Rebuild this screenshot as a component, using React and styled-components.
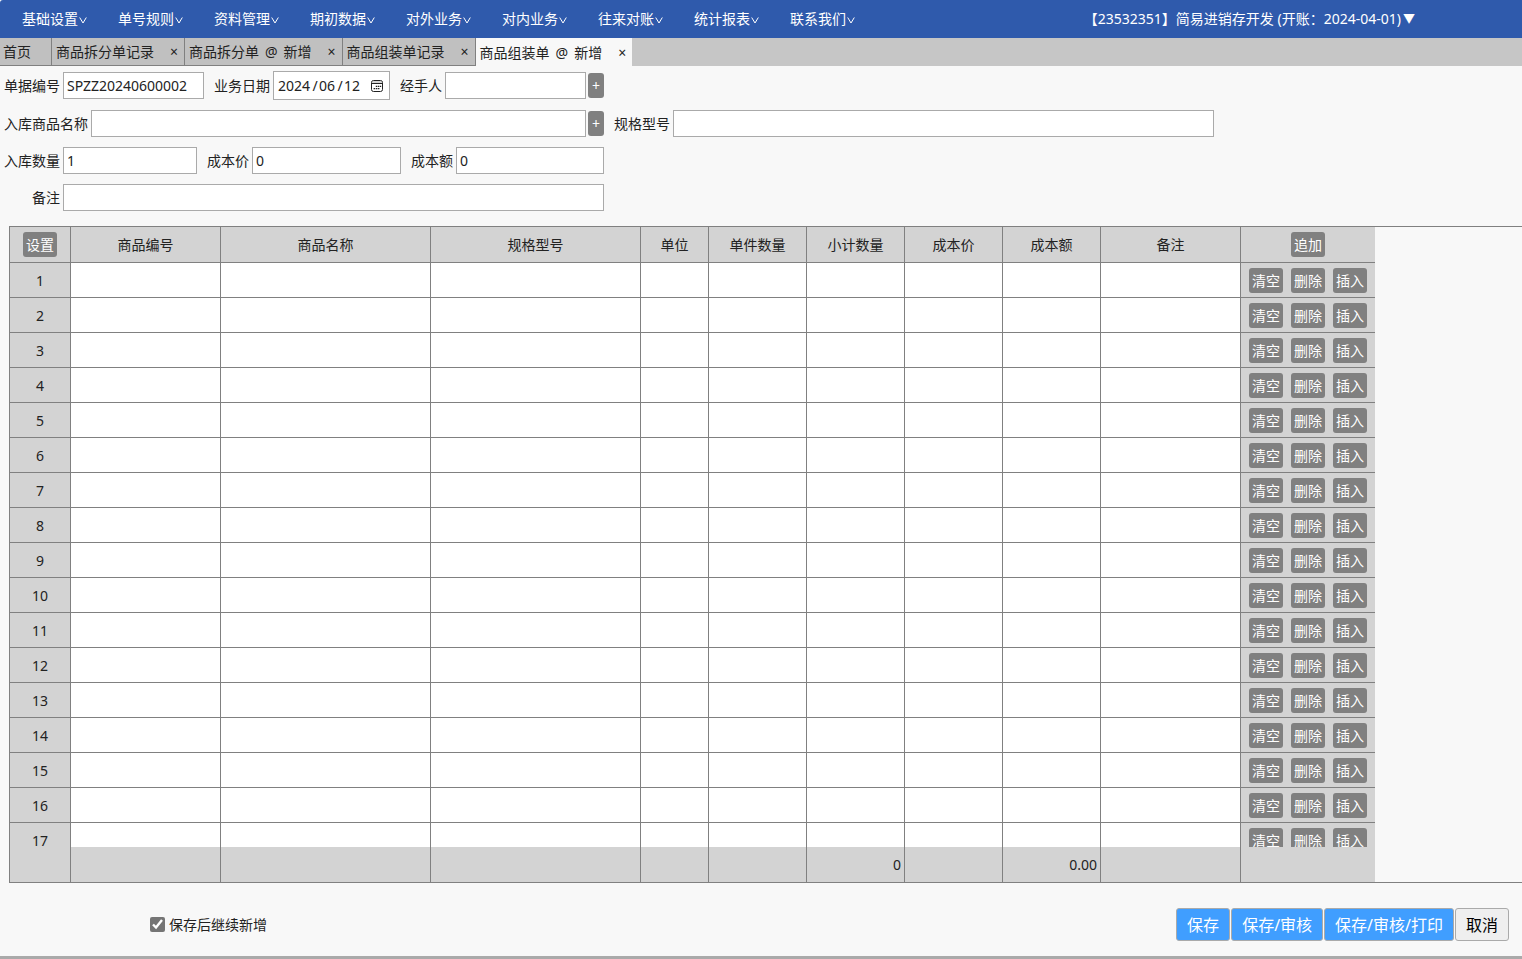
import React from 'react';
import styled, { createGlobalStyle } from 'styled-components';

const menus = [
	'基础设置',
	'单号规则',
	'资料管理',
	'期初数据',
	'对外业务',
	'对内业务',
	'往来对账',
	'统计报表',
	'联系我们',
];

const tabs = ['商品拆分单记录', '商品拆分单 @ 新增', '商品组装单记录', '商品组装单 @ 新增'];
const activeTab = 3;

const columns = [
	{ title: '商品编号', width: 150 },
	{ title: '商品名称', width: 210 },
	{ title: '规格型号', width: 210 },
	{ title: '单位', width: 68 },
	{ title: '单件数量', width: 98 },
	{ title: '小计数量', width: 98, total: '0' },
	{ title: '成本价', width: 98 },
	{ title: '成本额', width: 98, total: '0.00' },
	{ title: '备注', width: 140 },
];

const rows = Array.from({ length: 17 }, (_, i) => i + 1);

const CalendarIcon = () => (
	<svg width="14" height="14" viewBox="0 0 14 14" fill="none" stroke="#222">
		<rect x="1.5" y="1.5" width="11" height="11" rx="2" />
		<path d="M2 3h10" stroke="#aaa" />
		<path d="M2 4.5h10" />
		<path d="M5.8 7.4h1.5M7.9 7.4h1.5M10 7.4h1.2M3.6 9.6h1.5M5.8 9.6h1.5M7.9 9.6h1.5" strokeWidth="1.4" />
	</svg>
);

const Field = ({ id, label, value, width, add, labelWidth }) => (
	<FieldBox>
		<Label htmlFor={id} $width={labelWidth}>
			{label}
		</Label>
		<Input id={id} defaultValue={value} $width={width} />
		{add && <AddButton type="button">+</AddButton>}
	</FieldBox>
);

export default class App extends React.Component {
	render() {
		return (
			<React.Fragment>
				<GlobalStyle />
				<Page>
					<Nav>
						{menus.map((name) => (
							<MenuButton type="button" key={name}>
								{name}
								<Arrow viewBox="0 0 8 7">
									<path d="M0.7 0.5L4 6L7.3 0.5" />
								</Arrow>
							</MenuButton>
						))}
						<Account type="button">
							【23532351】简易进销存开发 (开账：2024-04-01)
							<Caret>▼</Caret>
						</Account>
					</Nav>
					<TabBar>
						<HomeTab href="#">首页</HomeTab>
						{tabs.map((name, i) => (
							<Tab key={name} $active={i === activeTab}>
								<TabLink href="#">
									{name.split(' ').map((part) => (
										<span key={part}>{part}</span>
									))}
								</TabLink>
								<Close type="button" aria-label="关闭">
									×
								</Close>
							</Tab>
						))}
					</TabBar>
					<Form>
						<Row>
							<Field id="no" label="单据编号" value="SPZZ20240600002" width={141} />
							<FieldBox>
								<Label htmlFor="year">业务日期</Label>
								<DateBox>
									<DatePart id="year" defaultValue="2024" $width={33} />
									<Slash>/</Slash>
									<DatePart aria-label="月" defaultValue="06" $width={17} />
									<Slash>/</Slash>
									<DatePart aria-label="日" defaultValue="12" $width={17} />
									<DateButton type="button" aria-label="选择日期">
										<CalendarIcon />
									</DateButton>
								</DateBox>
							</FieldBox>
							<Field id="handler" label="经手人" width={141} add />
						</Row>
						<Row>
							<Field id="product" label="入库商品名称" width={495} add />
							<Field id="spec" label="规格型号" width={541} />
						</Row>
						<Row>
							<Field id="qty" label="入库数量" value="1" width={134} />
							<Field id="price" label="成本价" value="0" width={149} />
							<Field id="amount" label="成本额" value="0" width={148} />
						</Row>
						<Row>
							<Field id="remark" label="备注" width={541} labelWidth={56} />
						</Row>
					</Form>
					<GridBox>
						<Grid>
							<thead>
								<tr>
									<HeadCell $width={61}>
										<SmallButton type="button">设置</SmallButton>
									</HeadCell>
									{columns.map((col) => (
										<HeadCell key={col.title} $width={col.width}>
											{col.title}
										</HeadCell>
									))}
									<HeadCell $width={134}>
										<SmallButton type="button">追加</SmallButton>
									</HeadCell>
								</tr>
							</thead>
							<tbody>
								{rows.map((n) => (
									<tr key={n}>
										<IndexCell>{n}</IndexCell>
										{columns.map((col) => (
											<Cell key={col.title} />
										))}
										<ActionCell>
											<Actions>
												<SmallButton type="button">清空</SmallButton>
												<SmallButton type="button">删除</SmallButton>
												<SmallButton type="button">插入</SmallButton>
											</Actions>
										</ActionCell>
									</tr>
								))}
							</tbody>
							<tfoot>
								<tr>
									<FootCell />
									{columns.map((col) => (
										<FootCell key={col.title}>{col.total}</FootCell>
									))}
									<FootCell />
								</tr>
							</tfoot>
						</Grid>
					</GridBox>
					<Footer>
						<Continue>
							<input type="checkbox" defaultChecked />
							保存后继续新增
						</Continue>
						<Buttons>
							<Button type="button" $primary>
								保存
							</Button>
							<Button type="button" $primary>
								保存/审核
							</Button>
							<Button type="button" $primary>
								保存/审核/打印
							</Button>
							<Button type="button">取消</Button>
						</Buttons>
					</Footer>
				</Page>
			</React.Fragment>
		);
	}
}

const GlobalStyle = createGlobalStyle`
	* {
		box-sizing: border-box;
	}
	body {
		margin: 0;
		background: #fff;
	}
	body, button, input {
		font-family: 'Noto Sans', 'Noto Sans CJK SC', sans-serif;
		font-size: 14px;
		line-height: 20px;
		color: #222;
	}
	button {
		padding: 0;
		border: 0;
		background: none;
	}
	a {
		color: inherit;
		text-decoration: none;
	}
`;

const Page = styled.div`
	display: flex;
	flex-direction: column;
	height: 100vh;
	background: #f8f8f8;
	border-bottom: 3px solid #aaa;
	border-top-left-radius: 3px;
	overflow: hidden;
`;

const Nav = styled.nav`
	display: flex;
	flex: none;
	height: 38px;
	padding: 0 107px 0 6px;
	background: #2f5aac;
`;

const MenuButton = styled.button`
	display: flex;
	align-items: center;
	padding: 0 15px 0 16px;
	color: #fff;
	white-space: nowrap;
`;

const Arrow = styled.svg`
	width: 8px;
	height: 7px;
	margin: 2px 0 0 1px;
	fill: none;
	stroke: #fff;
`;

const Account = styled.button`
	display: flex;
	align-items: center;
	gap: 2px;
	margin-left: auto;
	color: #fff;
	white-space: nowrap;
`;

const Caret = styled.span`
	font-size: 12px;
`;

const TabBar = styled.div`
	display: flex;
	flex: none;
	height: 28px;
	background: #c6c6c6;
`;

const HomeTab = styled.a`
	display: flex;
	align-items: center;
	padding: 0 20px 0 3px;
	background: #c0c0c0;
	border-right: 1px solid #808080;
	border-bottom: 1px solid #808080;
`;

const Tab = styled.div`
	display: flex;
	align-items: center;
	padding-left: 4px;
	white-space: nowrap;
	background: ${(p) => (p.$active ? '#f8f8f8' : '#c0c0c0')};
	border: solid #808080;
	border-width: ${(p) => (p.$active ? '0' : '0 1px 1px 0')};
	padding-top: ${(p) => (p.$active ? '2px' : '0')};
`;

const TabLink = styled.a`
	display: flex;
	gap: 6px;
`;

const Close = styled.button`
	width: 20px;
	margin-left: 10px;
`;

const Form = styled.form`
	display: flex;
	flex: none;
	flex-direction: column;
	gap: 10px;
	padding: 5px 4px 15px;
`;

const Row = styled.div`
	display: flex;
	align-items: center;
	gap: 10px;
`;

const FieldBox = styled.div`
	display: flex;
	align-items: center;
`;

const Label = styled.label`
	margin-right: 3px;
	min-width: ${(p) => (p.$width ? p.$width + 'px' : 'auto')};
	text-align: right;
	white-space: nowrap;
`;

const Input = styled.input`
	width: ${(p) => p.$width}px;
	height: 27px;
	padding: 0 3px;
	background: #fff;
	border: 1px solid #aaa;
	outline: none;
`;

const AddButton = styled.button`
	width: 16px;
	height: 25px;
	margin-left: 2px;
	color: #fff;
	background: #808080;
	border-radius: 3px;
`;

const DateBox = styled.div`
	display: flex;
	align-items: center;
	width: 117px;
	height: 29px;
	padding-left: 4px;
	background: #fff;
	border: 1px solid #aaa;
`;

const DatePart = styled.input`
	width: ${(p) => p.$width}px;
	padding: 0;
	border: 0;
	outline: none;
`;

const Slash = styled.span`
	width: 8px;
	text-align: center;
`;

const DateButton = styled.button`
	display: flex;
	margin: 0 5px 0 auto;
`;

const GridBox = styled.div`
	flex: 1;
	min-height: 0;
	margin-left: 9px;
	border: solid #808080;
	border-width: 1px 0 1px 1px;
	overflow: auto;
	scrollbar-width: none;
`;

const Grid = styled.table`
	width: 1365px;
	table-layout: fixed;
	border-collapse: separate;
	border-spacing: 0;
`;

const HeadCell = styled.th`
	position: sticky;
	top: 0;
	width: ${(p) => p.$width}px;
	height: 36px;
	padding: 0;
	font-weight: normal;
	background: #d3d3d3;
	border: solid #808080;
	border-width: 0 1px 1px 0;
	&:last-child {
		border-right: 0;
	}
`;

const Cell = styled.td`
	height: 35px;
	padding: 0;
	background: #fff;
	border: solid #808080;
	border-width: 0 1px 1px 0;
`;

const IndexCell = styled(Cell)`
	padding-top: 2px;
	text-align: center;
	background: #d3d3d3;
`;

const ActionCell = styled(Cell)`
	background: #d3d3d3;
	border-right: 0;
`;

const Actions = styled.div`
	display: flex;
	justify-content: center;
	gap: 8px;
	padding-top: 1px;
`;

const FootCell = styled.td`
	position: sticky;
	bottom: 0;
	height: 35px;
	padding: 0 3px;
	text-align: right;
	background: #d3d3d3;
	border-right: 1px solid #808080;
	&:last-child {
		border-right: 0;
	}
`;

const SmallButton = styled.button`
	width: 34px;
	height: 25px;
	color: #fff;
	background: #808080;
	border-radius: 3px;
`;

const Footer = styled.div`
	display: flex;
	flex: none;
	align-items: center;
	justify-content: space-between;
	padding: 25px 13px 15px 150px;
`;

const Continue = styled.label`
	display: flex;
	align-items: center;
	gap: 4px;
	input {
		width: 15px;
		height: 15px;
		margin: 0;
		accent-color: #757575;
	}
`;

const Buttons = styled.div`
	display: flex;
	gap: 1px;
`;

const Button = styled.button`
	height: 33px;
	padding: 0 10px;
	font-size: 16px;
	color: ${(p) => (p.$primary ? '#fff' : '#000')};
	background: ${(p) => (p.$primary ? '#409eff' : '#efefef')};
	border: 1px solid #aaa;
	border-radius: 3px;
`;
